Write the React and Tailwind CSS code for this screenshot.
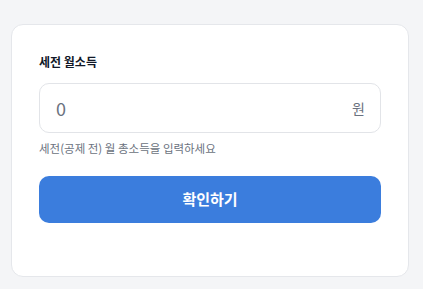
export default function App() {
  return (
    <div
      className="min-h-screen bg-[#f4f5f7] px-[11px] pt-6 pb-3"
      style={{ fontFamily: '"Noto Sans CJK KR", "Noto Sans", sans-serif' }}
    >
      <div className="w-[398px] rounded-xl border border-[#e5e7eb] bg-white px-[27px] pt-7 pb-[53px]">
        <label className="block text-[12px] font-bold leading-[18px] text-[#111827]">세전 월소득</label>
        <div className="mt-3 flex h-[50px] items-center justify-between rounded-[10px] border border-[#e2e4e8] pl-4 pr-[15px]">
          <span className="text-[18px] text-[#6b7280]">0</span>
          <span className="text-[14px] text-[#6b7280]">원</span>
        </div>
        <p className="mt-[7px] text-[11.5px] leading-4 text-[#6b7280]">세전(공제 전) 월 총소득을 입력하세요</p>
        <button className="mt-5 flex h-[47px] w-full items-center justify-center rounded-[10px] bg-[#3b7ddd] text-[15px] font-bold text-white">
          확인하기
        </button>
      </div>
    </div>
  )
}
